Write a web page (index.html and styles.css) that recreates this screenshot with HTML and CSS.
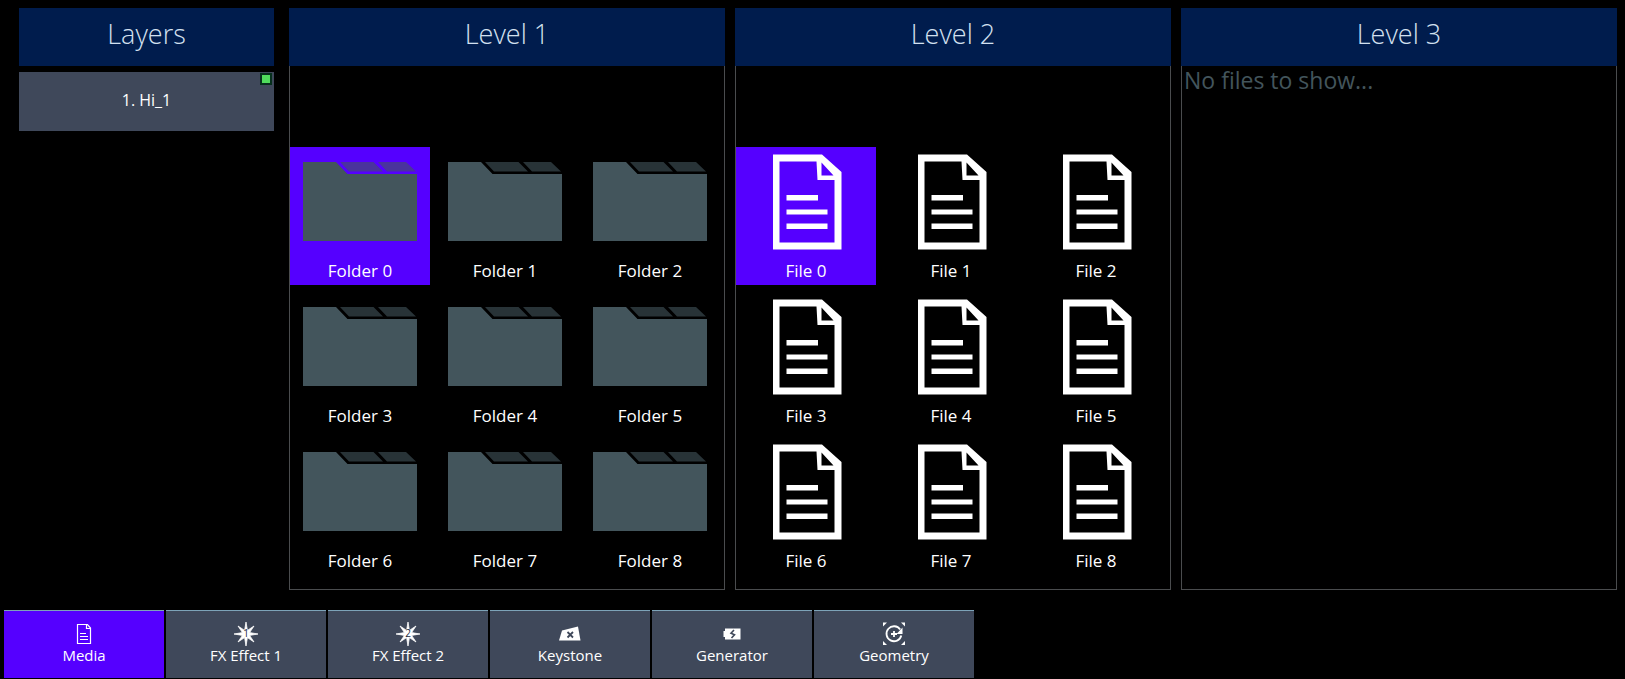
FILE: index.html
```html
<!DOCTYPE html>
<html lang="en">
<head>
<meta charset="utf-8">
<title>Media browser</title>
<link rel="stylesheet" href="styles.css">
</head>
<body>
<svg class="sprite" aria-hidden="true">
  <symbol id="folder" viewBox="0 0 114 96">
    <path fill="#43555c" d="M0 8H33L44.500 20H114V87H0z"/>
    <path fill="#43555c" fill-opacity=".6" d="M37 8H70.500L80 17.500H46zM75 8H103L113 17.500H84z"/>
  </symbol>
  <symbol id="file" viewBox="0 0 114 96">
    <path fill="#fff" fill-rule="evenodd" d="M24 .5H73L92.500 18V95.500H24zM30.500 7.500V88.500H85.500V26H68.500L67.500 7.500zM72.500 8.500V21.500H84.500z"/>
    <path fill="#fff" d="M37.500 41H69V46.500H37.500zM37.500 55.500H78.500V60.500H37.500zM37.500 69.500H78.500V75H37.500z"/>
  </symbol>
  <symbol id="star" viewBox="0 0 24 24">
    <path fill="#fff" stroke="#fff" stroke-width=".8" d="M12 0L13.400 8.400L20 4L15.600 10.600L24 12L15.600 13.400L20 20L13.400 15.600L12 24L10.600 15.600L4 20L8.400 13.400L0 12L8.400 10.600L4 4L10.600 8.400z"/>
  </symbol>
</svg>

<main class="browser">
  <section class="layers">
    <h2 class="heading">Layers</h2>
    <button class="layer" type="button">1. Hi_1<span class="status"></span></button>
  </section>

  <section class="level">
    <h2 class="heading">Level 1</h2>
    <div class="panel tiles">
      <button class="tile selected" type="button"><svg class="art"><use href="#folder"/></svg>Folder 0</button>
      <button class="tile" type="button"><svg class="art"><use href="#folder"/></svg>Folder 1</button>
      <button class="tile" type="button"><svg class="art"><use href="#folder"/></svg>Folder 2</button>
      <button class="tile" type="button"><svg class="art"><use href="#folder"/></svg>Folder 3</button>
      <button class="tile" type="button"><svg class="art"><use href="#folder"/></svg>Folder 4</button>
      <button class="tile" type="button"><svg class="art"><use href="#folder"/></svg>Folder 5</button>
      <button class="tile" type="button"><svg class="art"><use href="#folder"/></svg>Folder 6</button>
      <button class="tile" type="button"><svg class="art"><use href="#folder"/></svg>Folder 7</button>
      <button class="tile" type="button"><svg class="art"><use href="#folder"/></svg>Folder 8</button>
    </div>
  </section>

  <section class="level">
    <h2 class="heading">Level 2</h2>
    <div class="panel tiles">
      <button class="tile selected" type="button"><svg class="art"><use href="#file"/></svg>File 0</button>
      <button class="tile" type="button"><svg class="art"><use href="#file"/></svg>File 1</button>
      <button class="tile" type="button"><svg class="art"><use href="#file"/></svg>File 2</button>
      <button class="tile" type="button"><svg class="art"><use href="#file"/></svg>File 3</button>
      <button class="tile" type="button"><svg class="art"><use href="#file"/></svg>File 4</button>
      <button class="tile" type="button"><svg class="art"><use href="#file"/></svg>File 5</button>
      <button class="tile" type="button"><svg class="art"><use href="#file"/></svg>File 6</button>
      <button class="tile" type="button"><svg class="art"><use href="#file"/></svg>File 7</button>
      <button class="tile" type="button"><svg class="art"><use href="#file"/></svg>File 8</button>
    </div>
  </section>

  <section class="level">
    <h2 class="heading">Level 3</h2>
    <div class="panel"><p class="empty">No files to show...</p></div>
  </section>
</main>

<nav class="tabs">
  <button class="tab selected" type="button">
    <svg class="icon" viewBox="0 0 24 24"><path fill="none" stroke="#fff" d="M5.500 2.500H15.500L18.500 6V21.500H5.500zM14.500 2.500V6.500H18.500M8 11.500H14M8 14.500H16M8 17.500H16" stroke-width="1.200"/></svg>Media
  </button>
  <button class="tab" type="button">
    <svg class="icon" viewBox="0 0 24 24"><use href="#star"/><text class="digit" x="12" y="15">1</text></svg>FX Effect 1
  </button>
  <button class="tab" type="button">
    <svg class="icon" viewBox="0 0 24 24"><use href="#star"/><text class="digit" x="12" y="15">2</text></svg>FX Effect 2
  </button>
  <button class="tab" type="button">
    <svg class="icon" viewBox="0 0 24 24"><path fill="#fff" d="M1 18.500L4 8.500L20 4.500L22.500 18.500z"/><path stroke="#3f485a" stroke-width="1.800" d="M9.500 10L15 15.500M15 10L9.500 15.500"/></svg>Keystone
  </button>
  <button class="tab" type="button">
    <svg class="icon" viewBox="0 0 24 24"><path fill="#fff" d="M5 6.500H20.500V17.500H5V15H3.500V9H5z"/><path fill="none" stroke="#3f485a" stroke-width="1.600" d="M14 8L11 11.200L14.500 12.800L11.500 16"/></svg>Generator
  </button>
  <button class="tab" type="button">
    <svg class="icon" viewBox="0 0 24 24"><path fill="#fff" d="M1 .5H5L1 4.500zM23 .5H19L23 4.500zM1 23H5L1 19zM23 23H19L23 19zM20.500 5.500V12H14.500z"/><path fill="none" stroke="#fff" stroke-width="1.800" d="M18.200 7.500A7.500 7.500 0 1 0 19.300 13.500M12 9V15M9 12H15"/></svg>Geometry
  </button>
</nav>
</body>
</html>
```

FILE: styles.css
```css
* {
  box-sizing: border-box;
}

body {
  margin: 0;
  min-height: 100vh;
  display: flex;
  flex-direction: column;
  background: #000;
  color: #fff;
  font-family: "Open Sans", "Noto Sans", sans-serif;
}

button {
  margin: 0;
  border: 0;
  padding: 0;
  color: inherit;
  font: inherit;
}

.sprite {
  display: none;
}

.browser {
  flex: 1;
  display: grid;
  grid-template-columns: 260fr 436fr 436fr 436fr;
  gap: 10px;
  padding: 8px 8px 20px 19px;
}

.layers {
  padding-right: 5px;
}

.level {
  display: flex;
  flex-direction: column;
}

.heading {
  margin: 0;
  height: 58px;
  background: #001c4d;
  color: #d3e0f0;
  font-size: 27px;
  font-weight: 300;
  line-height: 52px;
  text-align: center;
}

.layer {
  position: relative;
  width: 100%;
  height: 59px;
  margin-top: 6px;
  padding-bottom: 3px;
  background: #3f485a;
  font-size: 16px;
}

.status {
  position: absolute;
  top: 1px;
  right: 2px;
  width: 12px;
  height: 12px;
  border: 2px solid #06301c;
  background: #50dc5c;
}

.panel {
  flex: 1;
  border: 1px solid #4a4c4e;
  border-top: 0;
}

.tiles {
  display: grid;
  grid-template-columns: repeat(auto-fill, 140px);
  align-content: start;
  gap: 7px 5px;
  padding: 81px 0 12px;
}

.tile {
  display: flex;
  flex-direction: column;
  align-items: center;
  height: 138px;
  padding-top: 7px;
  background: none;
  font-size: 17px;
  line-height: 42px;
}

.selected.selected {
  background: #5500ff;
}

.art {
  flex: none;
  width: 114px;
  height: 96px;
}

.empty {
  margin: 0;
  padding-left: 2px;
  color: #43555c;
  font-size: 23px;
  line-height: 28px;
}

.tabs {
  display: flex;
  gap: 2px;
  padding: 0 4px 1px;
}

.tab {
  display: flex;
  flex-direction: column;
  align-items: center;
  width: 160px;
  height: 68px;
  border-top: 1px solid #7da3b8;
  padding-top: 11px;
  background: #3f485a;
  font-size: 15px;
  line-height: 18px;
}

.icon {
  width: 24px;
  height: 24px;
}

.digit {
  fill: #20283a;
  font-size: 10px;
  text-anchor: middle;
}
```
